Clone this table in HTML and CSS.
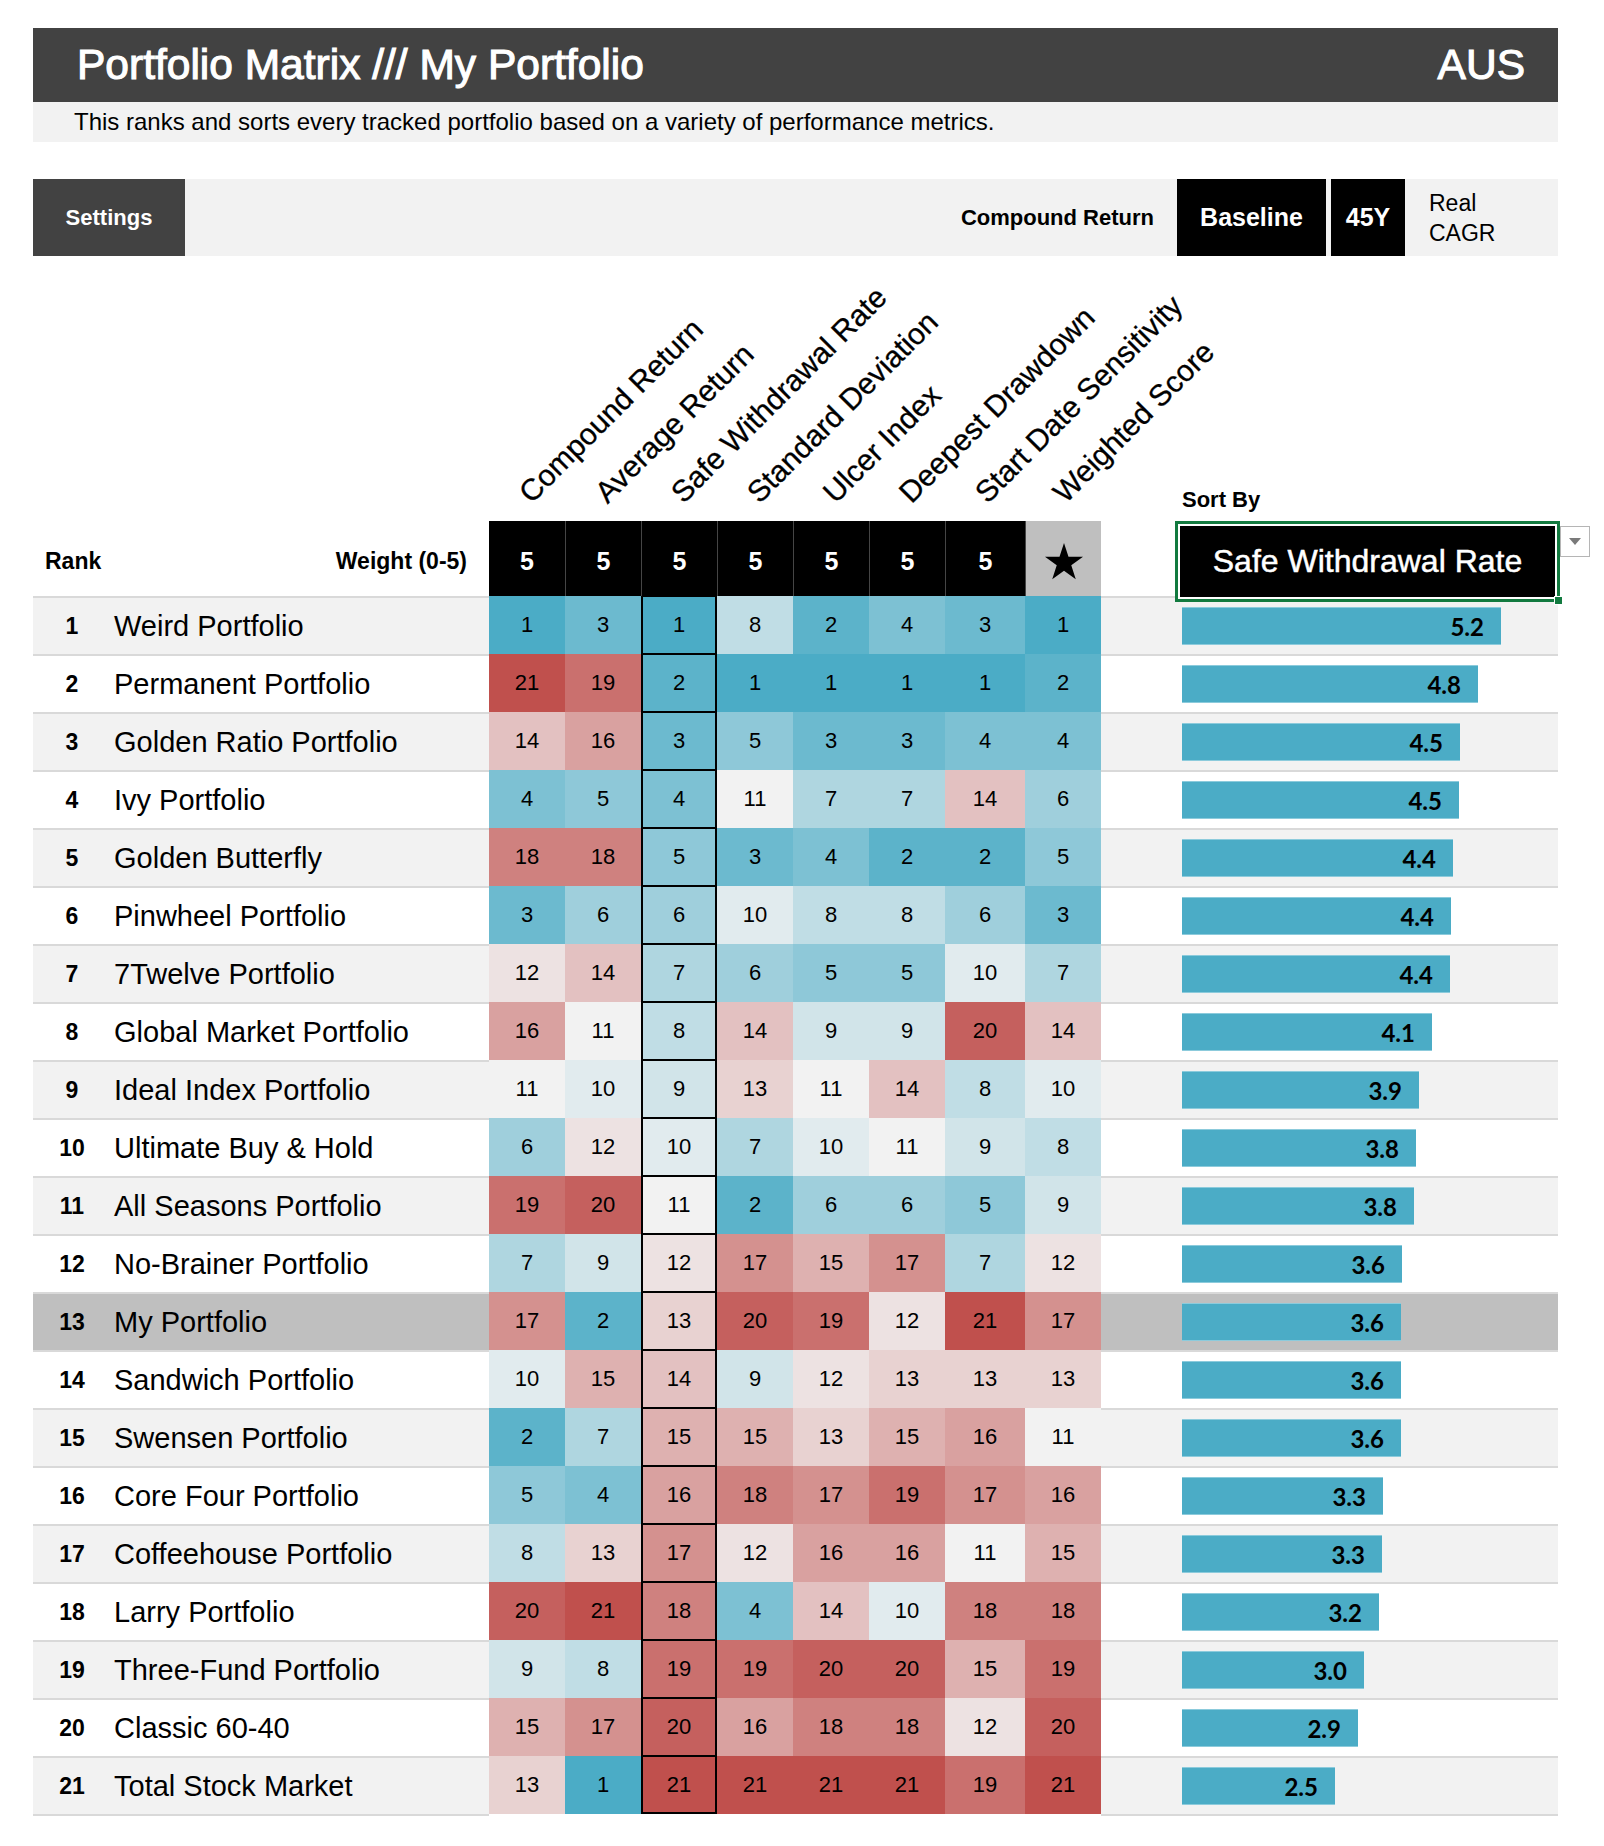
FILE: index.html
```html
<!DOCTYPE html>
<html lang="en">
<head>
<meta charset="utf-8">
<title>Portfolio Matrix</title>
<link rel="stylesheet" href="styles.css">
</head>
<body>
<div class="page">
  <header class="title-bar">
    <h1 class="title">Portfolio Matrix /// My Portfolio</h1>
    <span class="region">AUS</span>
  </header>
  <p class="subtitle">This ranks and sorts every tracked portfolio based on a variety of performance metrics.</p>

  <div class="settings-bar">
    <div class="settings-btn">Settings</div>
    <div class="metric-label">Compound Return</div>
    <div class="chip chip-baseline">Baseline</div>
    <div class="chip chip-years">45Y</div>
    <div class="real">Real<br>CAGR</div>
  </div>

  <div class="matrix">
    <div class="labels-row">
      <div class="labels-left"></div>
      <div class="col-label"><span>Compound Return</span></div>
      <div class="col-label"><span>Average Return</span></div>
      <div class="col-label"><span>Safe Withdrawal Rate</span></div>
      <div class="col-label"><span>Standard Deviation</span></div>
      <div class="col-label"><span>Ulcer Index</span></div>
      <div class="col-label"><span>Deepest Drawdown</span></div>
      <div class="col-label"><span>Start Date Sensitivity</span></div>
      <div class="col-label col-label-last"><span>Weighted Score</span></div>
      <div class="labels-right"><span class="sort-by">Sort By</span></div>
    </div>

    <div class="head-row">
      <div class="head-left"><span>Rank</span><span>Weight (0-5)</span></div>
      <div class="w">5</div>
      <div class="w">5</div>
      <div class="w">5</div>
      <div class="w">5</div>
      <div class="w">5</div>
      <div class="w">5</div>
      <div class="w">5</div>
      <div class="w star"><svg width="40" height="40" viewBox="0 0 40 40"><polygon points="20,1 24.49,14.82 39.02,14.82 27.27,23.36 31.76,37.18 20,28.64 8.24,37.18 12.73,23.36 0.98,14.82 15.51,14.82" fill="#000"/></svg></div>
      <div class="head-right">
        <div class="dropdown">Safe Withdrawal Rate<span class="handle"></span><span class="arrow"></span></div>
      </div>
    </div>

    <div class="row odd"><div class="rank">1</div><div class="name">Weird Portfolio</div>
      <div class="c v1">1</div><div class="c v3">3</div><div class="c v1 sel">1</div><div class="c v8">8</div><div class="c v2">2</div><div class="c v4">4</div><div class="c v3">3</div><div class="c v1">1</div>
      <div class="bar-cell"><div class="bar" style="width:319px">5.2</div></div></div>

    <div class="row"><div class="rank">2</div><div class="name">Permanent Portfolio</div>
      <div class="c v21">21</div><div class="c v19">19</div><div class="c v2 sel">2</div><div class="c v1">1</div><div class="c v1">1</div><div class="c v1">1</div><div class="c v1">1</div><div class="c v2">2</div>
      <div class="bar-cell"><div class="bar" style="width:296px">4.8</div></div></div>

    <div class="row odd"><div class="rank">3</div><div class="name">Golden Ratio Portfolio</div>
      <div class="c v14">14</div><div class="c v16">16</div><div class="c v3 sel">3</div><div class="c v5">5</div><div class="c v3">3</div><div class="c v3">3</div><div class="c v4">4</div><div class="c v4">4</div>
      <div class="bar-cell"><div class="bar" style="width:278px">4.5</div></div></div>

    <div class="row"><div class="rank">4</div><div class="name">Ivy Portfolio</div>
      <div class="c v4">4</div><div class="c v5">5</div><div class="c v4 sel">4</div><div class="c v11">11</div><div class="c v7">7</div><div class="c v7">7</div><div class="c v14">14</div><div class="c v6">6</div>
      <div class="bar-cell"><div class="bar" style="width:277px">4.5</div></div></div>

    <div class="row odd"><div class="rank">5</div><div class="name">Golden Butterfly</div>
      <div class="c v18">18</div><div class="c v18">18</div><div class="c v5 sel">5</div><div class="c v3">3</div><div class="c v4">4</div><div class="c v2">2</div><div class="c v2">2</div><div class="c v5">5</div>
      <div class="bar-cell"><div class="bar" style="width:271px">4.4</div></div></div>

    <div class="row"><div class="rank">6</div><div class="name">Pinwheel Portfolio</div>
      <div class="c v3">3</div><div class="c v6">6</div><div class="c v6 sel">6</div><div class="c v10">10</div><div class="c v8">8</div><div class="c v8">8</div><div class="c v6">6</div><div class="c v3">3</div>
      <div class="bar-cell"><div class="bar" style="width:269px">4.4</div></div></div>

    <div class="row odd"><div class="rank">7</div><div class="name">7Twelve Portfolio</div>
      <div class="c v12">12</div><div class="c v14">14</div><div class="c v7 sel">7</div><div class="c v6">6</div><div class="c v5">5</div><div class="c v5">5</div><div class="c v10">10</div><div class="c v7">7</div>
      <div class="bar-cell"><div class="bar" style="width:268px">4.4</div></div></div>

    <div class="row"><div class="rank">8</div><div class="name">Global Market Portfolio</div>
      <div class="c v16">16</div><div class="c v11">11</div><div class="c v8 sel">8</div><div class="c v14">14</div><div class="c v9">9</div><div class="c v9">9</div><div class="c v20">20</div><div class="c v14">14</div>
      <div class="bar-cell"><div class="bar" style="width:250px">4.1</div></div></div>

    <div class="row odd"><div class="rank">9</div><div class="name">Ideal Index Portfolio</div>
      <div class="c v11">11</div><div class="c v10">10</div><div class="c v9 sel">9</div><div class="c v13">13</div><div class="c v11">11</div><div class="c v14">14</div><div class="c v8">8</div><div class="c v10">10</div>
      <div class="bar-cell"><div class="bar" style="width:237px">3.9</div></div></div>

    <div class="row"><div class="rank">10</div><div class="name">Ultimate Buy &amp; Hold</div>
      <div class="c v6">6</div><div class="c v12">12</div><div class="c v10 sel">10</div><div class="c v7">7</div><div class="c v10">10</div><div class="c v11">11</div><div class="c v9">9</div><div class="c v8">8</div>
      <div class="bar-cell"><div class="bar" style="width:234px">3.8</div></div></div>

    <div class="row odd"><div class="rank">11</div><div class="name">All Seasons Portfolio</div>
      <div class="c v19">19</div><div class="c v20">20</div><div class="c v11 sel">11</div><div class="c v2">2</div><div class="c v6">6</div><div class="c v6">6</div><div class="c v5">5</div><div class="c v9">9</div>
      <div class="bar-cell"><div class="bar" style="width:232px">3.8</div></div></div>

    <div class="row"><div class="rank">12</div><div class="name">No-Brainer Portfolio</div>
      <div class="c v7">7</div><div class="c v9">9</div><div class="c v12 sel">12</div><div class="c v17">17</div><div class="c v15">15</div><div class="c v17">17</div><div class="c v7">7</div><div class="c v12">12</div>
      <div class="bar-cell"><div class="bar" style="width:220px">3.6</div></div></div>

    <div class="row me"><div class="rank">13</div><div class="name">My Portfolio</div>
      <div class="c v17">17</div><div class="c v2">2</div><div class="c v13 sel">13</div><div class="c v20">20</div><div class="c v19">19</div><div class="c v12">12</div><div class="c v21">21</div><div class="c v17">17</div>
      <div class="bar-cell"><div class="bar" style="width:219px">3.6</div></div></div>

    <div class="row"><div class="rank">14</div><div class="name">Sandwich Portfolio</div>
      <div class="c v10">10</div><div class="c v15">15</div><div class="c v14 sel">14</div><div class="c v9">9</div><div class="c v12">12</div><div class="c v13">13</div><div class="c v13">13</div><div class="c v13">13</div>
      <div class="bar-cell"><div class="bar" style="width:219px">3.6</div></div></div>

    <div class="row odd"><div class="rank">15</div><div class="name">Swensen Portfolio</div>
      <div class="c v2">2</div><div class="c v7">7</div><div class="c v15 sel">15</div><div class="c v15">15</div><div class="c v13">13</div><div class="c v15">15</div><div class="c v16">16</div><div class="c v11">11</div>
      <div class="bar-cell"><div class="bar" style="width:219px">3.6</div></div></div>

    <div class="row"><div class="rank">16</div><div class="name">Core Four Portfolio</div>
      <div class="c v5">5</div><div class="c v4">4</div><div class="c v16 sel">16</div><div class="c v18">18</div><div class="c v17">17</div><div class="c v19">19</div><div class="c v17">17</div><div class="c v16">16</div>
      <div class="bar-cell"><div class="bar" style="width:201px">3.3</div></div></div>

    <div class="row odd"><div class="rank">17</div><div class="name">Coffeehouse Portfolio</div>
      <div class="c v8">8</div><div class="c v13">13</div><div class="c v17 sel">17</div><div class="c v12">12</div><div class="c v16">16</div><div class="c v16">16</div><div class="c v11">11</div><div class="c v15">15</div>
      <div class="bar-cell"><div class="bar" style="width:200px">3.3</div></div></div>

    <div class="row"><div class="rank">18</div><div class="name">Larry Portfolio</div>
      <div class="c v20">20</div><div class="c v21">21</div><div class="c v18 sel">18</div><div class="c v4">4</div><div class="c v14">14</div><div class="c v10">10</div><div class="c v18">18</div><div class="c v18">18</div>
      <div class="bar-cell"><div class="bar" style="width:197px">3.2</div></div></div>

    <div class="row odd"><div class="rank">19</div><div class="name">Three-Fund Portfolio</div>
      <div class="c v9">9</div><div class="c v8">8</div><div class="c v19 sel">19</div><div class="c v19">19</div><div class="c v20">20</div><div class="c v20">20</div><div class="c v15">15</div><div class="c v19">19</div>
      <div class="bar-cell"><div class="bar" style="width:182px">3.0</div></div></div>

    <div class="row"><div class="rank">20</div><div class="name">Classic 60-40</div>
      <div class="c v15">15</div><div class="c v17">17</div><div class="c v20 sel">20</div><div class="c v16">16</div><div class="c v18">18</div><div class="c v18">18</div><div class="c v12">12</div><div class="c v20">20</div>
      <div class="bar-cell"><div class="bar" style="width:176px">2.9</div></div></div>

    <div class="row odd last"><div class="rank">21</div><div class="name">Total Stock Market</div>
      <div class="c v13">13</div><div class="c v1">1</div><div class="c v21 sel">21</div><div class="c v21">21</div><div class="c v21">21</div><div class="c v21">21</div><div class="c v19">19</div><div class="c v21">21</div>
      <div class="bar-cell"><div class="bar" style="width:153px">2.5</div></div></div>

    <div class="end-row"><div class="end-left"></div><div class="end-mid"></div><div class="end-right"></div></div>
  </div>
</div>
</body>
</html>
```

FILE: styles.css
```css
* { box-sizing: border-box; }

body {
  margin: 0;
  background: #ffffff;
  font-family: "Liberation Sans", Arial, sans-serif;
  color: #000;
}

.page {
  width: 1604px;
  padding: 28px 46px 0 33px;
}

/* ---------- title ---------- */
.title-bar {
  height: 74px;
  background: #424242;
  color: #fff;
  display: flex;
  align-items: center;
  justify-content: space-between;
  padding: 0 33px 0 44px;
}
.title {
  margin: 0;
  font-size: 42.5px;
  font-weight: normal;
  -webkit-text-stroke: 1.1px #fff;
}
.region {
  font-size: 42.5px;
  -webkit-text-stroke: 1.1px #fff;
}

.subtitle {
  margin: 0;
  height: 40px;
  line-height: 40px;
  background: #f2f2f2;
  padding-left: 41px;
  font-size: 24px;
}

/* ---------- settings bar ---------- */
.settings-bar {
  margin-top: 37px;
  height: 77px;
  display: flex;
  background: #f2f2f2;
}
.settings-btn {
  width: 152px;
  background: #424242;
  color: #fff;
  font-weight: bold;
  font-size: 22px;
  display: flex;
  align-items: center;
  justify-content: center;
}
.metric-label {
  margin-left: auto;
  margin-right: 23px;
  align-self: center;
  font-weight: bold;
  font-size: 22px;
}
.chip {
  background: #000;
  color: #fff;
  font-weight: bold;
  font-size: 25px;
  display: flex;
  align-items: center;
  justify-content: center;
}
.chip-baseline { width: 149px; }
.chip-years { width: 74px; margin-left: 5px; }
.real {
  width: 153px;
  padding-left: 24px;
  align-self: center;
  font-size: 23px;
  line-height: 30px;
}

/* ---------- matrix ---------- */
.labels-row,
.head-row,
.row,
.end-row {
  display: grid;
  grid-template-columns: 78px 378px 76px 76px 76px 76px 76px 76px 80px 76px 457px;
}

.labels-row {
  height: 265px;
}
.labels-left { grid-column: span 2; }
.col-label {
  position: relative;
}
.col-label span {
  position: absolute;
  left: 46px;
  bottom: 13px;
  transform-origin: 0 100%;
  transform: rotate(-45deg);
  white-space: nowrap;
  font-size: 30px;
  line-height: 30px;
  -webkit-text-stroke: 0.3px #000;
}
.col-label-last span { left: 44px; }
.labels-right {
  display: flex;
  align-items: flex-end;
  padding: 0 0 8px 81px;
}
.sort-by {
  font-weight: bold;
  font-size: 22px;
}

.head-row {
  height: 75px;
}
.head-left {
  grid-column: span 2;
  display: flex;
  align-items: center;
  justify-content: space-between;
  padding: 0 22px 0 12px;
  font-weight: bold;
  font-size: 23px;
}
.w {
  background: #000;
  color: #fff;
  font-weight: bold;
  font-size: 25px;
  display: flex;
  align-items: center;
  justify-content: center;
}
.w + .w { border-left: 1px solid #454545; }
.w.star { background: #bfbfbf; }
.head-right {
  display: flex;
  align-items: center;
  padding-left: 74px;
}
.dropdown {
  position: relative;
  flex: none;
  width: 385px;
  height: 81px;
  border: 3px solid #127a3f;
  box-shadow: inset 0 0 0 2px #fff;
  background: #000;
  color: #fff;
  font-size: 32px;
  -webkit-text-stroke: 0.5px #fff;
  display: flex;
  align-items: center;
  justify-content: center;
}
.handle {
  position: absolute;
  right: -6px;
  bottom: -6px;
  width: 9px;
  height: 9px;
  background: #127a3f;
  border: 1px solid #fff;
}
.arrow {
  position: absolute;
  left: calc(100% + 3px);
  top: 2px;
  width: 30px;
  height: 31px;
  background: #fff;
  border: 1px solid #b5b5b5;
}
.arrow::after {
  content: "";
  position: absolute;
  left: 8px;
  top: 11px;
  border-left: 6px solid transparent;
  border-right: 6px solid transparent;
  border-top: 7px solid #7a7a7a;
}

/* rows */
.row {
  height: 58px;
}
.rank,
.name,
.bar-cell {
  border-top: 2px solid #d9d9d9;
  background: #fff;
  display: flex;
  align-items: center;
}
.row.odd .rank,
.row.odd .name,
.row.odd .bar-cell { background: #f2f2f2; }
.row.me .rank,
.row.me .name,
.row.me .bar-cell { background: #bfbfbf; }

.rank {
  justify-content: center;
  font-weight: bold;
  font-size: 23px;
}
.name {
  padding-left: 3px;
  font-size: 29px;
  white-space: nowrap;
}
.c {
  display: flex;
  align-items: center;
  justify-content: center;
  font-size: 22px;
}
.c.sel {
  border-left: 2px solid #000;
  border-right: 2px solid #000;
  border-top: 1px solid #000;
  border-bottom: 1px solid #000;
}
.row.last .c.sel { border-bottom-width: 2px; }

.bar-cell {
  padding-left: 81px;
}
.bar {
  height: 38px;
  background: #4bacc6;
  box-shadow: inset 0 1px 0 #8ccbdc, inset 0 -1px 0 #8ccbdc;
  text-align: right;
  padding-right: 17px;
  font-family: Lato, "Open Sans", sans-serif;
  font-weight: bold;
  font-size: 24px;
  line-height: 40px;
}

.end-row { height: 2px; }
.end-left { grid-column: span 2; background: #d9d9d9; }
.end-mid { grid-column: span 8; }
.end-right { background: #d9d9d9; }

/* heat scale: blue (1) -> light gray (11) -> red (21) */
.v1  { background: rgb(75,172,198); }
.v2  { background: rgb(92,179,202); }
.v3  { background: rgb(108,186,207); }
.v4  { background: rgb(125,193,211); }
.v5  { background: rgb(142,200,216); }
.v6  { background: rgb(159,207,220); }
.v7  { background: rgb(175,214,224); }
.v8  { background: rgb(192,221,229); }
.v9  { background: rgb(209,228,233); }
.v10 { background: rgb(225,235,238); }
.v11 { background: rgb(242,242,242); }
.v12 { background: rgb(237,226,226); }
.v13 { background: rgb(232,210,209); }
.v14 { background: rgb(227,193,193); }
.v15 { background: rgb(222,177,176); }
.v16 { background: rgb(217,161,160); }
.v17 { background: rgb(212,145,143); }
.v18 { background: rgb(207,129,127); }
.v19 { background: rgb(202,112,110); }
.v20 { background: rgb(197,96,94); }
.v21 { background: rgb(192,80,77); }
```
